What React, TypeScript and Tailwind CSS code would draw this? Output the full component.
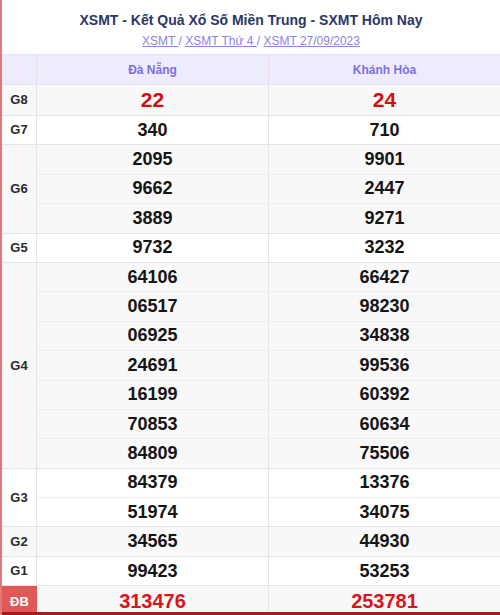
import React from "react";

type Prize = { label: string; rows: [string, string][]; red?: boolean; big?: boolean };

const prizes: Prize[] = [
  { label: "G8", rows: [["22", "24"]], red: true, big: true },
  { label: "G7", rows: [["340", "710"]] },
  { label: "G6", rows: [["2095", "9901"], ["9662", "2447"], ["3889", "9271"]] },
  { label: "G5", rows: [["9732", "3232"]] },
  {
    label: "G4",
    rows: [
      ["64106", "66427"],
      ["06517", "98230"],
      ["06925", "34838"],
      ["24691", "99536"],
      ["16199", "60392"],
      ["70853", "60634"],
      ["84809", "75506"],
    ],
  },
  { label: "G3", rows: [["84379", "13376"], ["51974", "34075"]] },
  { label: "G2", rows: [["34565", "44930"]] },
  { label: "G1", rows: [["99423", "53253"]] },
];

const Cells = ({ values, p }: { values: string[]; p: Prize }) => (
  <div className="flex flex-col">
    {values.map((v, i) => (
      <div
        key={i}
        className={`shrink-0 flex items-center justify-center border-b ${p.big ? "h-[31px]" : "h-[29.4px]"} ${
          i === values.length - 1 ? "border-[#e4e4e4]" : "border-[#eeeeee]"
        } ${p.red ? "text-[21px] text-[#d50d0d]" : "text-[18px] text-[#151515]"} font-bold`}
      >
        {v}
      </div>
    ))}
  </div>
);

export default function App() {
  return (
    <div className="w-[500px] h-[615px] overflow-hidden bg-white border-l-2 border-[#e37676] flex flex-col font-['Liberation_Sans',Arial,sans-serif]">
      <h1 className="shrink-0 h-[31px] pt-[11px] text-center text-[14px] leading-[18px] font-bold text-[#2c3768]">
        XSMT - Kết Quả Xổ Số Miền Trung - SXMT Hôm Nay
      </h1>
      <div className="shrink-0 h-[23px] text-center text-[12px] leading-[20px] text-[#8a83e6]">
        <a className="underline">XSMT </a> / <a className="underline">XSMT Thứ 4 </a> /{" "}
        <a className="underline">XSMT 27/09/2023</a>
      </div>

      <div className="shrink-0 grid grid-cols-[35px_232px_1fr] h-[31px] bg-[#eeecfc] border-t border-b border-[#e9e0f4] text-[12px] font-bold text-[#7a70e4]">
        <div className="border-r border-[#eedcea]" />
        <div className="flex items-center justify-center border-r border-[#eedcea]">Đà Nẵng</div>
        <div className="flex items-center justify-center">Khánh Hòa</div>
      </div>

      {prizes.map((p, idx) => (
        <div
          key={p.label}
          className={`shrink-0 grid grid-cols-[35px_232px_1fr] ${idx % 2 === 0 ? "bg-[#f8f8f8]" : "bg-white"}`}
        >
          <div className="flex items-center justify-center border-r border-b border-[#e4e4ec] text-[13px] font-bold text-[#2a2a2a]">
            {p.label}
          </div>
          <div className="border-r border-[#e4e4ec]">
            <Cells values={p.rows.map((r) => r[0])} p={p} />
          </div>
          <Cells values={p.rows.map((r) => r[1])} p={p} />
        </div>
      ))}

      <div className="grid grid-cols-[35px_232px_1fr] flex-1 min-h-0 bg-[#f8f8f8]">
        <div className="flex items-center justify-center bg-[#e05858] text-[13px] font-bold text-white">ĐB</div>
        <div className="flex items-center justify-center border-r border-[#e4e4ec] text-[20px] font-bold text-[#d8141c]">
          313476
        </div>
        <div className="flex items-center justify-center text-[20px] font-bold text-[#d8141c]">253781</div>
      </div>
      <div className="shrink-0 h-[3px] bg-[#a61c1c]" />
    </div>
  );
}
